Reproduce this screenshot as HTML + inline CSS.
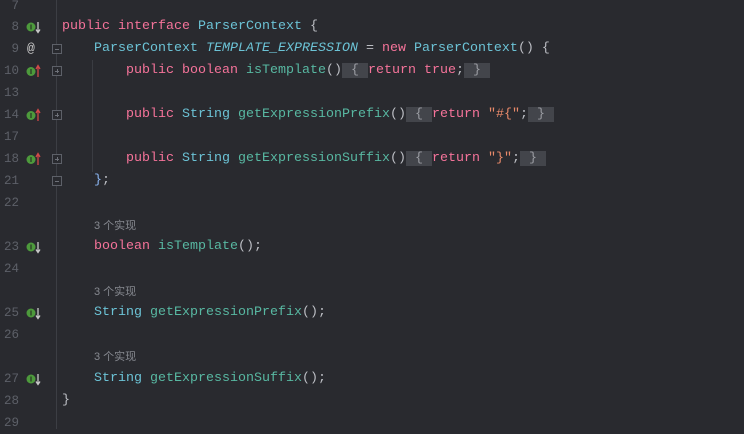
<!DOCTYPE html>
<html><head><meta charset="utf-8"><style>
body{margin:0;width:744px;height:429px;background:#292a2f;overflow:hidden;position:relative;font-family:"Liberation Mono",monospace;font-size:13.33px}
.r{position:absolute;left:0;height:22px;line-height:22px;white-space:pre;width:744px}
.n{position:absolute;left:0;width:19px;text-align:right;color:#5d6068;font-size:12.5px}
.c{position:absolute;left:62px;color:#bcbec4}
.k{color:#f5739a}.t{color:#6cc3d6}.m{color:#58b8a2}.s{color:#ea8a6a}.i{color:#6cc3d6;font-style:italic}.b{color:#8ab4f0}
.h{position:absolute;left:94px;color:#868990;font-size:11px;font-family:"Liberation Sans","Noto Sans CJK SC",sans-serif}
.f{background:#43454b;color:#9a9ca2;padding:0 1px}
.g{position:absolute;left:26px;top:4px;width:16px;height:14px}
.fold{position:absolute;left:52px;top:6px;width:8px;height:8px;border:1px solid #5d6068;background:#292a2f}
.fold:after{content:"";position:absolute;left:2px;top:3.5px;width:4px;height:1px;background:#6d7078}
.pl:before{content:"";position:absolute;left:3.5px;top:2px;width:1px;height:4px;background:#6d7078}
</style></head><body>
<div style="position:absolute;left:56px;top:0;width:1px;height:429px;background:#3c3e44"></div>
<div style="position:absolute;left:92px;top:60px;width:1px;height:112px;background:#3a3c42"></div>

<div class="r" style="top:-5px"><span class="n">7</span></div>
<div class="r" style="top:16px"><span class="n">8</span><svg class="g" viewBox="0 0 16 14"><circle cx="5" cy="7" r="4.5" fill="#4d9a3c"/><rect x="4.5" y="4.5" width="1" height="5" fill="#1e1e1e"/><path d="M12 2v10M10 9.5l2 3 2-3" stroke="#c9c9c9" stroke-width="1.3" fill="none"/></svg><span class="c"><span class="k">public interface </span><span class="t">ParserContext</span> {</span></div>
<div class="r" style="top:38px"><span class="n">9</span><span style="position:absolute;left:27px;color:#c9c9c9;font-size:13px">@</span><span class="fold"></span><span class="c">    <span class="t">ParserContext</span> <span class="i">TEMPLATE_EXPRESSION</span> = <span class="k">new </span><span class="t">ParserContext</span>() {</span></div>
<div class="r" style="top:60px"><span class="n">10</span><svg class="g" viewBox="0 0 16 14"><circle cx="5" cy="7.5" r="4.5" fill="#4d9a3c"/><rect x="4.5" y="5" width="1" height="5" fill="#1e1e1e"/><path d="M12 13V2.5M10 5l2-3.5 2 3.5" stroke="#d04848" stroke-width="1.3" fill="none"/></svg><span class="fold pl"></span><span class="c">        <span class="k">public boolean </span><span class="m">isTemplate</span>()<span class="f"> { </span><span class="k">return true</span>;<span class="f"> } </span></span></div>
<div class="r" style="top:82px"><span class="n">13</span></div>
<div class="r" style="top:104px"><span class="n">14</span><svg class="g" viewBox="0 0 16 14"><circle cx="5" cy="7.5" r="4.5" fill="#4d9a3c"/><rect x="4.5" y="5" width="1" height="5" fill="#1e1e1e"/><path d="M12 13V2.5M10 5l2-3.5 2 3.5" stroke="#d04848" stroke-width="1.3" fill="none"/></svg><span class="fold pl"></span><span class="c">        <span class="k">public </span><span class="t">String </span><span class="m">getExpressionPrefix</span>()<span class="f"> { </span><span class="k">return </span><span class="s">"#{"</span>;<span class="f"> } </span></span></div>
<div class="r" style="top:126px"><span class="n">17</span></div>
<div class="r" style="top:148px"><span class="n">18</span><svg class="g" viewBox="0 0 16 14"><circle cx="5" cy="7.5" r="4.5" fill="#4d9a3c"/><rect x="4.5" y="5" width="1" height="5" fill="#1e1e1e"/><path d="M12 13V2.5M10 5l2-3.5 2 3.5" stroke="#d04848" stroke-width="1.3" fill="none"/></svg><span class="fold pl"></span><span class="c">        <span class="k">public </span><span class="t">String </span><span class="m">getExpressionSuffix</span>()<span class="f"> { </span><span class="k">return </span><span class="s">"}"</span>;<span class="f"> } </span></span></div>
<div class="r" style="top:170px"><span class="n">21</span><span class="fold"></span><span class="c">    <span class="b">}</span>;</span></div>
<div class="r" style="top:192px"><span class="n">22</span></div>
<div class="r" style="top:215px"><span class="h">3 个实现</span></div>
<div class="r" style="top:236px"><span class="n">23</span><svg class="g" viewBox="0 0 16 14"><circle cx="5" cy="7" r="4.5" fill="#4d9a3c"/><rect x="4.5" y="4.5" width="1" height="5" fill="#1e1e1e"/><path d="M12 2v10M10 9.5l2 3 2-3" stroke="#c9c9c9" stroke-width="1.3" fill="none"/></svg><span class="c">    <span class="k">boolean </span><span class="m">isTemplate</span>();</span></div>
<div class="r" style="top:258px"><span class="n">24</span></div>
<div class="r" style="top:281px"><span class="h">3 个实现</span></div>
<div class="r" style="top:302px"><span class="n">25</span><svg class="g" viewBox="0 0 16 14"><circle cx="5" cy="7" r="4.5" fill="#4d9a3c"/><rect x="4.5" y="4.5" width="1" height="5" fill="#1e1e1e"/><path d="M12 2v10M10 9.5l2 3 2-3" stroke="#c9c9c9" stroke-width="1.3" fill="none"/></svg><span class="c">    <span class="t">String </span><span class="m">getExpressionPrefix</span>();</span></div>
<div class="r" style="top:324px"><span class="n">26</span></div>
<div class="r" style="top:346px"><span class="h">3 个实现</span></div>
<div class="r" style="top:368px"><span class="n">27</span><svg class="g" viewBox="0 0 16 14"><circle cx="5" cy="7" r="4.5" fill="#4d9a3c"/><rect x="4.5" y="4.5" width="1" height="5" fill="#1e1e1e"/><path d="M12 2v10M10 9.5l2 3 2-3" stroke="#c9c9c9" stroke-width="1.3" fill="none"/></svg><span class="c">    <span class="t">String </span><span class="m">getExpressionSuffix</span>();</span></div>
<div class="r" style="top:390px"><span class="n">28</span><span class="c">}</span></div>
<div class="r" style="top:412px"><span class="n">29</span></div>
</body></html>
